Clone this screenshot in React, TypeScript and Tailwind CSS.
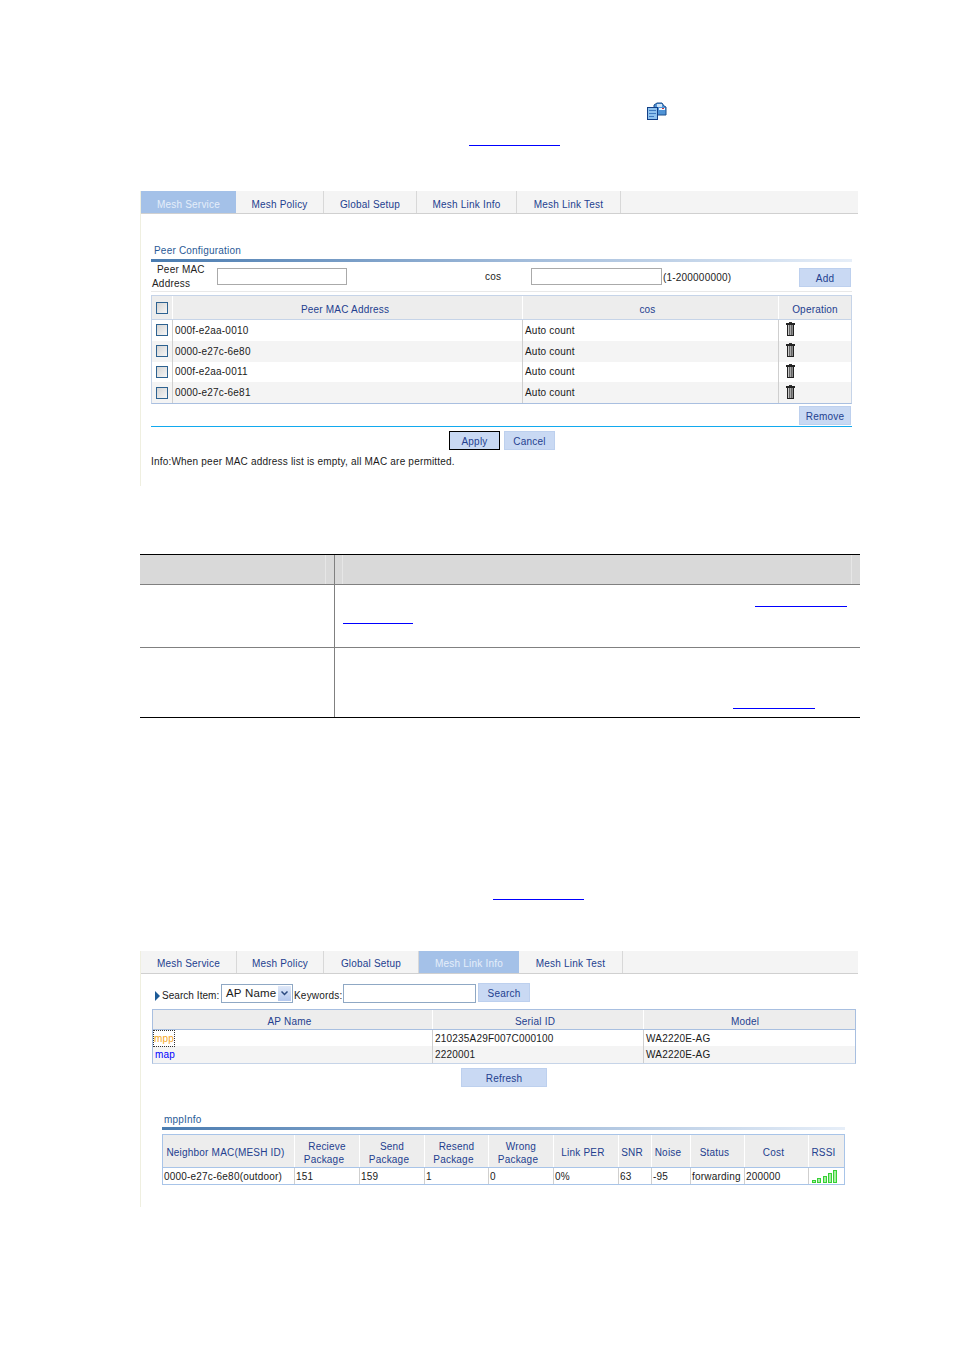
const macRows = ["000f-e2aa-0010", "0000-e27c-6e80", "000f-e2aa-0011", "0000-e27c-6e81"];

const neighborCols = [
  { label: ["Neighbor MAC(MESH ID)"], value: "0000-e27c-6e80(outdoor)", width: "w-[132px]" },
  { label: ["Recieve", "Package"], value: "151", width: "w-[65px]" },
  { label: ["Send", "Package"], value: "159", width: "w-[65px]" },
  { label: ["Resend", "Package"], value: "1", width: "w-[64px]" },
  { label: ["Wrong", "Package"], value: "0", width: "w-[65px]" },
  { label: ["Link PER"], value: "0%", width: "w-[65px]" },
  { label: ["SNR"], value: "63", width: "w-[33px]" },
  { label: ["Noise"], value: "-95", width: "w-[39px]" },
  { label: ["Status"], value: "forwarding", width: "w-[54px]" },
  { label: ["Cost"], value: "200000", width: "w-[64px]" },
];

function Tabs({ tabs, active, textPad }: { tabs: { name: string; width: string }[]; active: string; textPad: string }) {
  return (
    <div className="flex h-[23px] border-b border-[#d0d0d0] bg-[#f4f4f4]">
      {tabs.map((tab) =>
        tab.name === active ? (
          <div
            key={tab.name}
            className={`flex items-center justify-center bg-[#a4c1e8] text-[#e4eefa] ${textPad} ${tab.width}`}
          >
            {tab.name}
          </div>
        ) : (
          <div
            key={tab.name}
            className={`flex items-center justify-center border-r border-[#d8d8d8] text-[#23408f] ${textPad} ${tab.width}`}
          >
            {tab.name}
          </div>
        ),
      )}
    </div>
  );
}

function Btn({ label, width, focused }: { label: string; width: string; focused?: boolean }) {
  return (
    <div
      className={`flex h-[19px] items-center justify-center bg-[#c9d9f3] pt-[2px] text-[#23408f] ${width} ${
        focused ? "border border-black" : "border border-[#bdd0ee]"
      }`}
    >
      {label}
    </div>
  );
}

function SectionTitle({ title }: { title: string }) {
  return <div className="pl-[3px] leading-[12px] text-[#2a5a96]">{title}</div>;
}

function GradientBar() {
  return <div className="h-[3px] bg-linear-to-r from-[#4a7cb0] via-[#9db8d8] to-[#e6eef8]" />;
}

function Checkbox() {
  return (
    <div className="h-[12px] w-[12px] border border-[#2d6291] bg-linear-to-br from-[#d4d4d4] to-[#f6f6f6]" />
  );
}

function TrashIcon() {
  return (
    <svg width="9" height="14" viewBox="0 0 9 14" className="block">
      <rect x="3" y="0" width="3" height="1" fill="#333" />
      <rect x="0" y="1" width="9" height="2" fill="#222" />
      <rect x="1" y="3" width="7" height="11" fill="#222" />
      <rect x="2" y="3" width="1" height="10" fill="#c8c8c8" />
      <rect x="3" y="3" width="1" height="10" fill="#666" />
      <rect x="4" y="3" width="1" height="10" fill="#a8a8a8" />
      <rect x="5" y="3" width="1" height="10" fill="#666" />
      <rect x="6" y="3" width="1" height="10" fill="#8a8a8a" />
    </svg>
  );
}

function PublishIcon() {
  return (
    <svg width="20" height="18" viewBox="0 0 20 18" className="block">
      <path d="M7 6 L7 3 L10 1 L15 1 L17 4 L19 5 L19 13 L9 13 L9 6 Z" fill="#4f93d6" stroke="#1d4f8c" strokeWidth="1" />
      <rect x="10" y="2" width="5" height="3" fill="#cfe4f8" />
      <rect x="12" y="6" width="6" height="2" fill="#eef6fd" />
      <rect x="15" y="6" width="2" height="1" fill="#d03030" />
      <rect x="0.5" y="5.5" width="10" height="12" fill="#8fc2ee" stroke="#123f86" strokeWidth="1" />
      <rect x="2" y="8" width="7" height="1" fill="#3f7bc0" />
      <rect x="2" y="11" width="7" height="1" fill="#3f7bc0" />
      <rect x="2" y="14" width="5" height="1" fill="#3f7bc0" />
    </svg>
  );
}

function SignalBars() {
  const heights = ["h-[3px]", "h-[5px]", "h-[7px]", "h-[10px]", "h-[13px]"];
  return (
    <div className="flex items-end gap-[1.25px]">
      {heights.map((h) => (
        <div key={h} className={`w-[4px] border border-[#35d035] bg-[#a6f0a0] ${h}`} />
      ))}
    </div>
  );
}

function PeerPanel() {
  return (
    <div className="h-[295px] w-[718px] border-l border-[#efefe0]">
      <Tabs
        active="Mesh Service"
        textPad="pt-[5px]"
        tabs={[
          { name: "Mesh Service", width: "w-[95px]" },
          { name: "Mesh Policy", width: "w-[88px]" },
          { name: "Global Setup", width: "w-[93px]" },
          { name: "Mesh Link Info", width: "w-[100px]" },
          { name: "Mesh Link Test", width: "w-[104px]" },
        ]}
      />
      <div className="w-[711px] pl-[10px]">
        <div className="pt-[31px] pb-[2px]">
          <SectionTitle title="Peer Configuration" />
        </div>
        <GradientBar />
        <div className="flex h-[30px] items-center border-b border-[#e8e8e8] pl-[1px] pr-[1px]">
          <div className="w-[65px] indent-[5px] leading-[14px] text-[#222]">Peer MAC Address</div>
          <div className="h-[17px] w-[130px] border border-[#aaa]" />
          <div className="w-[184px] pl-[138px] text-[#222]">cos</div>
          <div className="h-[17px] w-[131px] border border-[#aaa]" />
          <div className="ml-[1px] pt-px text-[#222]">(1-200000000)</div>
          <div className="ml-auto mt-px">
            <Btn label="Add" width="w-[52px]" />
          </div>
        </div>
        <div className="mt-[3px] border border-[#c6d4e8] border-b-[#a9bfe0]">
          <div className="flex h-[24px] items-center border-b border-[#c6d4e8] bg-[#ededed] text-[#23408f]">
            <div className="flex h-full w-[21px] items-center justify-center border-r border-white">
              <Checkbox />
            </div>
            <div className="flex h-full w-[350px] items-center justify-center border-r border-white pt-[3px] pr-[5px]">Peer MAC Address</div>
            <div className="flex h-full w-[256px] items-center justify-center border-r border-white pt-[3px] pr-[6px]">cos</div>
            <div className="flex h-full flex-1 items-center justify-center pt-[3px]">Operation</div>
          </div>
          {macRows.map((mac, i) => (
            <div
              key={mac}
              className={`flex h-[20.75px] items-center text-[#1a1a1a] ${i % 2 === 1 ? "bg-[#f4f4f4]" : "bg-white"}`}
            >
              <div className="flex h-full w-[21px] items-center justify-center border-r border-[#cfcfcf]">
                <Checkbox />
              </div>
              <div className="flex h-full w-[350px] items-center border-r border-[#cfcfcf] pl-[2px]">{mac}</div>
              <div className="flex h-full w-[256px] items-center border-r border-[#cfcfcf] pl-[2px]">Auto count</div>
              <div className="flex h-full flex-1 items-center pb-[2px] pl-[7px]">
                <TrashIcon />
              </div>
            </div>
          ))}
        </div>
        <div className="flex justify-end pt-[2px] pr-[1px]">
          <Btn label="Remove" width="w-[52px]" />
        </div>
        <div className="mt-[1px] h-px bg-[#12a9ee]" />
        <div className="flex gap-[4px] pt-[4px] pl-[298px]">
          <Btn label="Apply" width="w-[51px]" focused />
          <Btn label="Cancel" width="w-[51px]" />
        </div>
        <div className="pt-[6px] leading-[12px] text-[#1a1a1a]">
          Info:When peer MAC address list is empty, all MAC are permitted.
        </div>
      </div>
    </div>
  );
}

function ParamTable() {
  return (
    <div className="mt-[68px] w-[720px] border-y border-black">
      <div className="flex h-[30px] border-b border-[#808080] bg-[#d9d9d9]">
        <div className="w-[186px] border-r border-[#e6e6e6]" />
        <div className="w-[9px] border-r border-[#808080]" />
        <div className="w-[8px] border-r border-[#e6e6e6]" />
        <div className="w-[509px] border-r border-[#e6e6e6]" />
      </div>
      <div className="flex h-[63px] border-b border-[#808080]">
        <div className="w-[195px] border-r border-[#808080]" />
        <div className="pl-[8px] pt-[21px]">
          <div className="ml-[412px] h-px w-[92px] bg-[#0000ff]" />
          <div className="mt-[16px] h-px w-[70px] bg-[#0000ff]" />
        </div>
      </div>
      <div className="flex h-[69px]">
        <div className="w-[195px] border-r border-[#808080]" />
        <div className="pl-[398px] pt-[60px]">
          <div className="h-px w-[82px] bg-[#0000ff]" />
        </div>
      </div>
    </div>
  );
}

function LinkInfoPanel() {
  return (
    <div className="h-[256px] w-[718px] border-l border-[#efefe0]">
      <Tabs
        active="Mesh Link Info"
        textPad="pt-[2px]"
        tabs={[
          { name: "Mesh Service", width: "w-[96px]" },
          { name: "Mesh Policy", width: "w-[87px]" },
          { name: "Global Setup", width: "w-[95px]" },
          { name: "Mesh Link Info", width: "w-[100px]" },
          { name: "Mesh Link Test", width: "w-[104px]" },
        ]}
      />
      <div className="flex items-center pt-[9px] pl-[14px] whitespace-nowrap text-[#1a1a1a]">
        <div className="mt-[6px] h-0 w-0 border-y-[5px] border-l-[5px] border-y-transparent border-l-[#1c5a96]" />
        <div className="ml-[2px] w-[59px] pt-[5px] tracking-[0.05px]">Search Item:</div>
        <div className="flex h-[19px] w-[72px] items-center justify-between border border-[#8fa8c4] pl-[4px] pr-[1px] text-[11.5px]">
          <span className="pt-[2px]">AP Name</span>
          <div className="flex h-[15px] w-[13px] items-center justify-center bg-linear-to-b from-[#dfe8f8] to-[#b4c8ee]">
            <svg width="7" height="5" viewBox="0 0 7 5">
              <path d="M0.5 0.5 L3.5 3.5 L6.5 0.5" fill="none" stroke="#2b4a80" strokeWidth="1.5" />
            </svg>
          </div>
        </div>
        <div className="ml-[1px] w-[49px] pt-[5px]">Keywords:</div>
        <div className="h-[19px] w-[133px] border border-[#8fa8c4]" />
        <div className="ml-[2px] -translate-y-[1px]">
          <Btn label="Search" width="w-[52px]" />
        </div>
      </div>
      <div className="mt-[6px] ml-[11px] w-[704px] border border-[#a8bfe0] border-b-[#c6d4e8]">
        <div className="flex h-[20px] items-center border-b border-[#a8bfe0] bg-[#ededed] text-[#23408f]">
          <div className="flex h-full w-[280px] items-center justify-center border-r border-white pt-[4px] pr-[6px]">AP Name</div>
          <div className="flex h-full w-[211px] items-center justify-center border-r border-white pt-[4px] pr-[6px]">Serial ID</div>
          <div className="flex h-full flex-1 items-center justify-center pt-[4px] pr-[9px]">Model</div>
        </div>
        <div className="flex h-[16px] items-center bg-white text-[#1a1a1a]">
          <div className="flex h-full w-[280px] items-center border-r border-[#cfcfcf] pl-[1px]">
            <span className="outline-1 outline-dotted outline-[#333] text-[#f5a623]">mpp</span>
          </div>
          <div className="flex h-full w-[211px] items-center border-r border-[#cfcfcf] pl-[2px]">210235A29F007C000100</div>
          <div className="flex h-full flex-1 items-center pl-[2px]">WA2220E-AG</div>
        </div>
        <div className="flex h-[17px] items-center bg-[#f4f4f4] text-[#1a1a1a]">
          <div className="flex h-full w-[280px] items-center border-r border-[#cfcfcf] pl-[2px] text-[#0000ff]">map</div>
          <div className="flex h-full w-[211px] items-center border-r border-[#cfcfcf] pl-[2px]">2220001</div>
          <div className="flex h-full flex-1 items-center pl-[2px]">WA2220E-AG</div>
        </div>
      </div>
      <div className="ml-[320px] mt-[4px]">
        <Btn label="Refresh" width="w-[86px]" />
      </div>
      <div className="ml-[21px] mt-[27px] w-[683px]">
        <div className="pb-[1px] pl-[2px] leading-[12px] text-[#2a5a96]">mppInfo</div>
        <GradientBar />
        <div className="mt-[4px] border border-[#a8c4e8]">
          <div className="flex h-[33px] border-b border-[#a8c4e8] bg-[#ededed] text-[#23408f]">
            {neighborCols.map((col) => (
              <div
                key={col.label[0]}
                className={`flex h-full flex-col items-center justify-center border-r border-white pt-[3px] pr-[6px] leading-[13px] ${col.width}`}
              >
                {col.label.map((line, i) => (
                  <div key={line} className={i === 0 && col.label.length > 1 ? "pl-[6px]" : ""}>
                    {line}
                  </div>
                ))}
              </div>
            ))}
            <div className="flex h-full flex-1 items-center justify-center pt-[3px] pr-[6px]">RSSI</div>
          </div>
          <div className="flex h-[16px] text-[#1a1a1a]">
            {neighborCols.map((col) => (
              <div
                key={col.label[0]}
                className={`flex h-full items-center border-r border-[#cfcfcf] pl-[1px] whitespace-nowrap ${col.width}`}
              >
                {col.value}
              </div>
            ))}
            <div className="flex h-full flex-1 items-center pl-[3px]">
              <SignalBars />
            </div>
          </div>
        </div>
      </div>
    </div>
  );
}

export default function App() {
  return (
    <div className="h-[1350px] w-[954px] overflow-hidden bg-white pl-[140px] font-['Liberation_Sans',Arial,sans-serif] text-[10px] tracking-[0.2px]">
      <div className="h-[191px] pt-[102px]">
        <div className="pl-[507px]">
          <PublishIcon />
        </div>
        <div className="mt-[25px] ml-[329px] h-px w-[91px] bg-[#0000ff]" />
      </div>
      <PeerPanel />
      <ParamTable />
      <div className="h-[233px] pt-[181px] pl-[353px]">
        <div className="h-px w-[91px] bg-[#0000ff]" />
      </div>
      <LinkInfoPanel />
    </div>
  );
}
